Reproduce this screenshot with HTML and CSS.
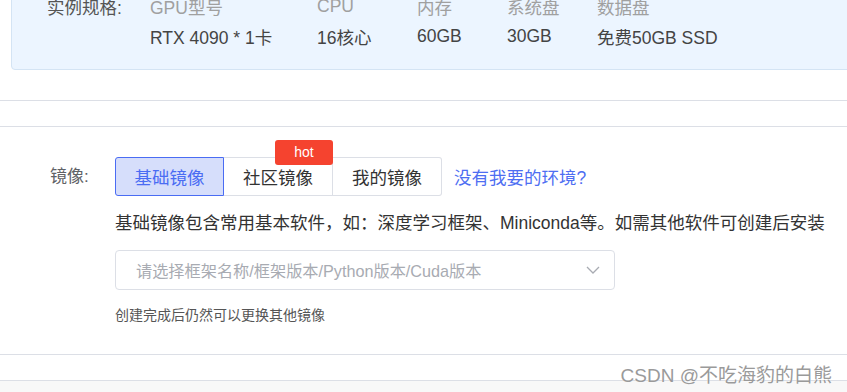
FILE: index.html
```html
<!DOCTYPE html>
<html lang="zh-CN">
<head>
<meta charset="utf-8">
<title>镜像选择</title>
<link rel="stylesheet" href="styles.css">
</head>
<body>
<div class="page">
  <div class="spec">
    <div class="spec-grid">
      <div class="spec-label">实例规格:</div>
      <div class="spec-head">GPU型号</div>
      <div class="spec-head">CPU</div>
      <div class="spec-head">内存</div>
      <div class="spec-head">系统盘</div>
      <div class="spec-head">数据盘</div>
      <div></div>
      <div class="spec-val">RTX 4090 * 1卡</div>
      <div class="spec-val">16核心</div>
      <div class="spec-val">60GB</div>
      <div class="spec-val">30GB</div>
      <div class="spec-val">免费50GB SSD</div>
    </div>
  </div>
  <div class="divider first"></div>
  <div class="divider second"></div>

  <section class="image-section">
    <div class="row">
      <div class="row-label">镜像:</div>
      <div class="row-body">
        <div class="tabs-line">
          <div class="tabs">
            <button class="tab active">基础镜像</button>
            <button class="tab">社区镜像<span class="hot">hot</span></button>
            <button class="tab last">我的镜像</button>
          </div>
          <a class="link">没有我要的环境?</a>
        </div>
        <p class="desc">基础镜像包含常用基本软件，如：深度学习框架、Miniconda等。如需其他软件可创建后安装</p>
        <div class="select">
          <span class="placeholder">请选择框架名称/框架版本/Python版本/Cuda版本</span>
          <svg class="chev" width="14" height="8" viewBox="0 0 14 8"><path d="M1 1 L7 7 L13 1" fill="none" stroke="#a8abb2" stroke-width="1.3"/></svg>
        </div>
        <p class="hint">创建完成后仍然可以更换其他镜像</p>
      </div>
    </div>
  </section>
  <div class="divider third"></div>
  <div class="footer"></div>
  <div class="watermark">CSDN @不吃海豹的白熊</div>
</div>
</body>
</html>
```

FILE: styles.css
```css
html, body {
  margin: 0;
  padding: 0;
  background: #fff;
  overflow: hidden;
}
body {
  font-family: "Liberation Sans", "Noto Sans CJK SC", sans-serif;
  color: #333;
}
.page {
  position: relative;
  width: 847px;
  height: 392px;
  overflow: hidden;
}
.spec {
  margin: -18px -40px 0 11px;
  background: #ecf5ff;
  border: 1px solid #d4e4f4;
  border-radius: 4px;
  padding: 8px 0 18px 35px;
}
.spec-grid {
  display: grid;
  grid-template-columns: 103px 167px 100px 90px 90px auto;
  grid-auto-rows: 30px;
  align-items: center;
  font-size: 17.5px;
}
.spec-label {
  color: #555;
}
.spec-head {
  color: #a0a0a0;
}
.spec-val {
  color: #444;
}
.divider {
  height: 1px;
  background: #dcdfe6;
}
.divider.first {
  margin-top: 30px;
}
.divider.second {
  margin-top: 25px;
}
.image-section {
  padding: 30px 0 29px 0;
}
.row {
  display: flex;
}
.row-label {
  width: 65px;
  padding-left: 50px;
  height: 39px;
  line-height: 39px;
  font-size: 17px;
  color: #606266;
}
.row-body {
  display: flex;
  flex-direction: column;
}
.tabs-line {
  display: flex;
  align-items: center;
}
.tabs {
  display: flex;
}
.tab {
  position: relative;
  width: 109px;
  height: 39px;
  border: 1px solid #dcdfe6;
  border-left: none;
  background: #fff;
  font-family: inherit;
  font-size: 17.5px;
  color: #333;
  padding: 0;
  cursor: pointer;
}
.tab.active {
  border: 1px solid #4a6cf3;
  background: #d6defb;
  color: #4a6cf3;
  border-radius: 3px 0 0 3px;
}
.tab.last {
  border-radius: 0 3px 3px 0;
}
.hot {
  position: absolute;
  right: -1px;
  top: -18px;
  width: 58px;
  height: 25px;
  line-height: 25px;
  background: #f5432f;
  color: #fff;
  font-size: 14px;
  border-radius: 3px;
  text-align: center;
}
.link {
  margin-left: 12px;
  font-size: 17.5px;
  color: #4e6ef2;
}
.desc {
  margin: 16px 0 0 0;
  line-height: 22px;
  font-size: 17.5px;
  color: #333;
  white-space: nowrap;
}
.select {
  box-sizing: border-box;
  margin-top: 16px;
  width: 500px;
  height: 40px;
  border: 1px solid #dcdfe6;
  border-radius: 4px;
  display: flex;
  align-items: center;
  justify-content: space-between;
  padding: 0 14px 0 20px;
}
.placeholder {
  font-size: 16.2px;
  color: #a8abb2;
}
.chev {
  display: block;
}
.hint {
  margin: 15px 0 0 0;
  line-height: 20px;
  font-size: 14px;
  color: #555;
}
.footer {
  margin-top: 25px;
  border-top: 1px solid #dcdfe6;
  height: 20px;
  background: #f8f8f8;
}
.watermark {
  position: absolute;
  right: 15px;
  top: 360px;
  font-size: 19px;
  color: #9a9a9a;
  text-shadow: 0 0 1px #fff;
}
```
